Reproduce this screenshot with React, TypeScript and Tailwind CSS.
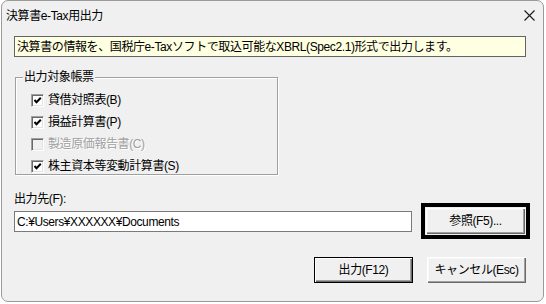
import React from "react";

const font = { fontFamily: '"Liberation Sans", "Noto Sans CJK JP", sans-serif' };

function Check({ checked, disabled }: { checked: boolean; disabled?: boolean }) {
  return (
    <span
      className={`flex h-[13px] w-[13px] shrink-0 items-center justify-center border border-t-[#a0a0a0] border-l-[#a0a0a0] border-b-white border-r-white shadow-[inset_1px_1px_0_#696969,inset_-1px_-1px_0_#e3e3e3] ${
        disabled ? "bg-[#f0f0f0]" : "bg-white"
      }`}
    >
      {checked && (
        <svg width="9" height="9" viewBox="0 0 9 9">
          <polyline points="1.5,4 3.5,6.2 7.8,1.8" fill="none" stroke="#000" strokeWidth="2" />
        </svg>
      )}
    </span>
  );
}

function Row({ label, checked, disabled }: { label: string; checked: boolean; disabled?: boolean }) {
  return (
    <div className="flex h-[13px] items-center">
      <Check checked={checked} disabled={disabled} />
      <span
        className={`ml-[4px] text-[12px] leading-[13px] ${
          disabled ? "text-[#a0a0a0] [text-shadow:1px_1px_0_#ffffff]" : "text-black"
        }`}
      >
        {label}
      </span>
    </div>
  );
}

function Btn({ children, def, cls = "" }: { children: React.ReactNode; def?: boolean; cls?: string }) {
  return (
    <div
      className={`flex h-[26px] w-[99px] items-center justify-center bg-[#f0f0f0] text-[12px] text-black ${
        def
          ? "border border-black shadow-[inset_1px_1px_0_#ffffff,inset_-1px_-1px_0_#696969,inset_-2px_-2px_0_#a0a0a0]"
          : "shadow-[inset_1px_1px_0_#ffffff,inset_-1px_-1px_0_#696969,inset_-2px_-2px_0_#a0a0a0,inset_2px_2px_0_#f8f8f8]"
      } ${cls}`}
    >
      {children}
    </div>
  );
}

export default function App() {
  return (
    <div className="h-[304px] w-[546px] bg-white pl-[1px] tracking-[-0.4px]" style={font}>
      <div className="flex h-[302px] w-[543px] flex-col rounded-[7px] border border-[#9a9a9a] bg-[#f0f0f0]">
        <div className="flex h-[29px] shrink-0 items-center justify-between pl-[4px] pr-[8px]">
          <span className="text-[12px] text-black">決算書e-Tax用出力</span>
          <svg width="11" height="11" viewBox="0 0 11 11">
            <path d="M0.5 0.5 L10.5 10.5 M10.5 0.5 L0.5 10.5" stroke="#1a1a1a" strokeWidth="1.1" />
          </svg>
        </div>
        <div className="flex flex-col pl-[12px] pr-[17px]">
          <div className="mt-[6px] flex h-[21px] items-center border border-[#646464] bg-[#ffffe1] px-[2px] text-[12px] text-black">
            決算書の情報を、国税庁e-Taxソフトで取込可能なXBRL(Spec2.1)形式で出力します。
          </div>
          <div className="relative ml-[1px] mt-[20px] h-[98px] w-[263px] border border-[#a0a0a0] shadow-[inset_1px_1px_0_#ffffff,1px_1px_0_#ffffff]">
            <span className="absolute -top-[9px] left-[7px] bg-[#f0f0f0] px-[1px] text-[12px] leading-[16px] text-black">
              出力対象帳票
            </span>
            <div className="flex flex-col gap-[9px] pl-[15px] pt-[16px]">
              <Row label="貸借対照表(B)" checked />
              <Row label="損益計算書(P)" checked />
              <Row label="製造原価報告書(C)" checked={false} disabled />
              <Row label="株主資本等変動計算書(S)" checked />
            </div>
          </div>
          <div className="mt-[17px] flex items-start gap-[14px]">
            <div className="flex flex-col">
              <span className="h-[14px] text-[12px] leading-[14px] text-black">出力先(F):</span>
              <div className="mt-[5px] flex h-[21px] w-[398px] items-center border border-[#7a7a7a] bg-white px-[2px] text-[12px] text-black">
                C:¥Users¥XXXXXX¥Documents
              </div>
            </div>
            <Btn cls="mt-[16px] outline-[4px] outline-solid outline-black outline-offset-[1px]">参照(F5)...</Btn>
          </div>
          <div className="mt-[23px] flex justify-end gap-[14px]">
            <Btn def cls="w-[98px]">出力(F12)</Btn>
            <Btn>キャンセル(Esc)</Btn>
          </div>
        </div>
      </div>
    </div>
  );
}
